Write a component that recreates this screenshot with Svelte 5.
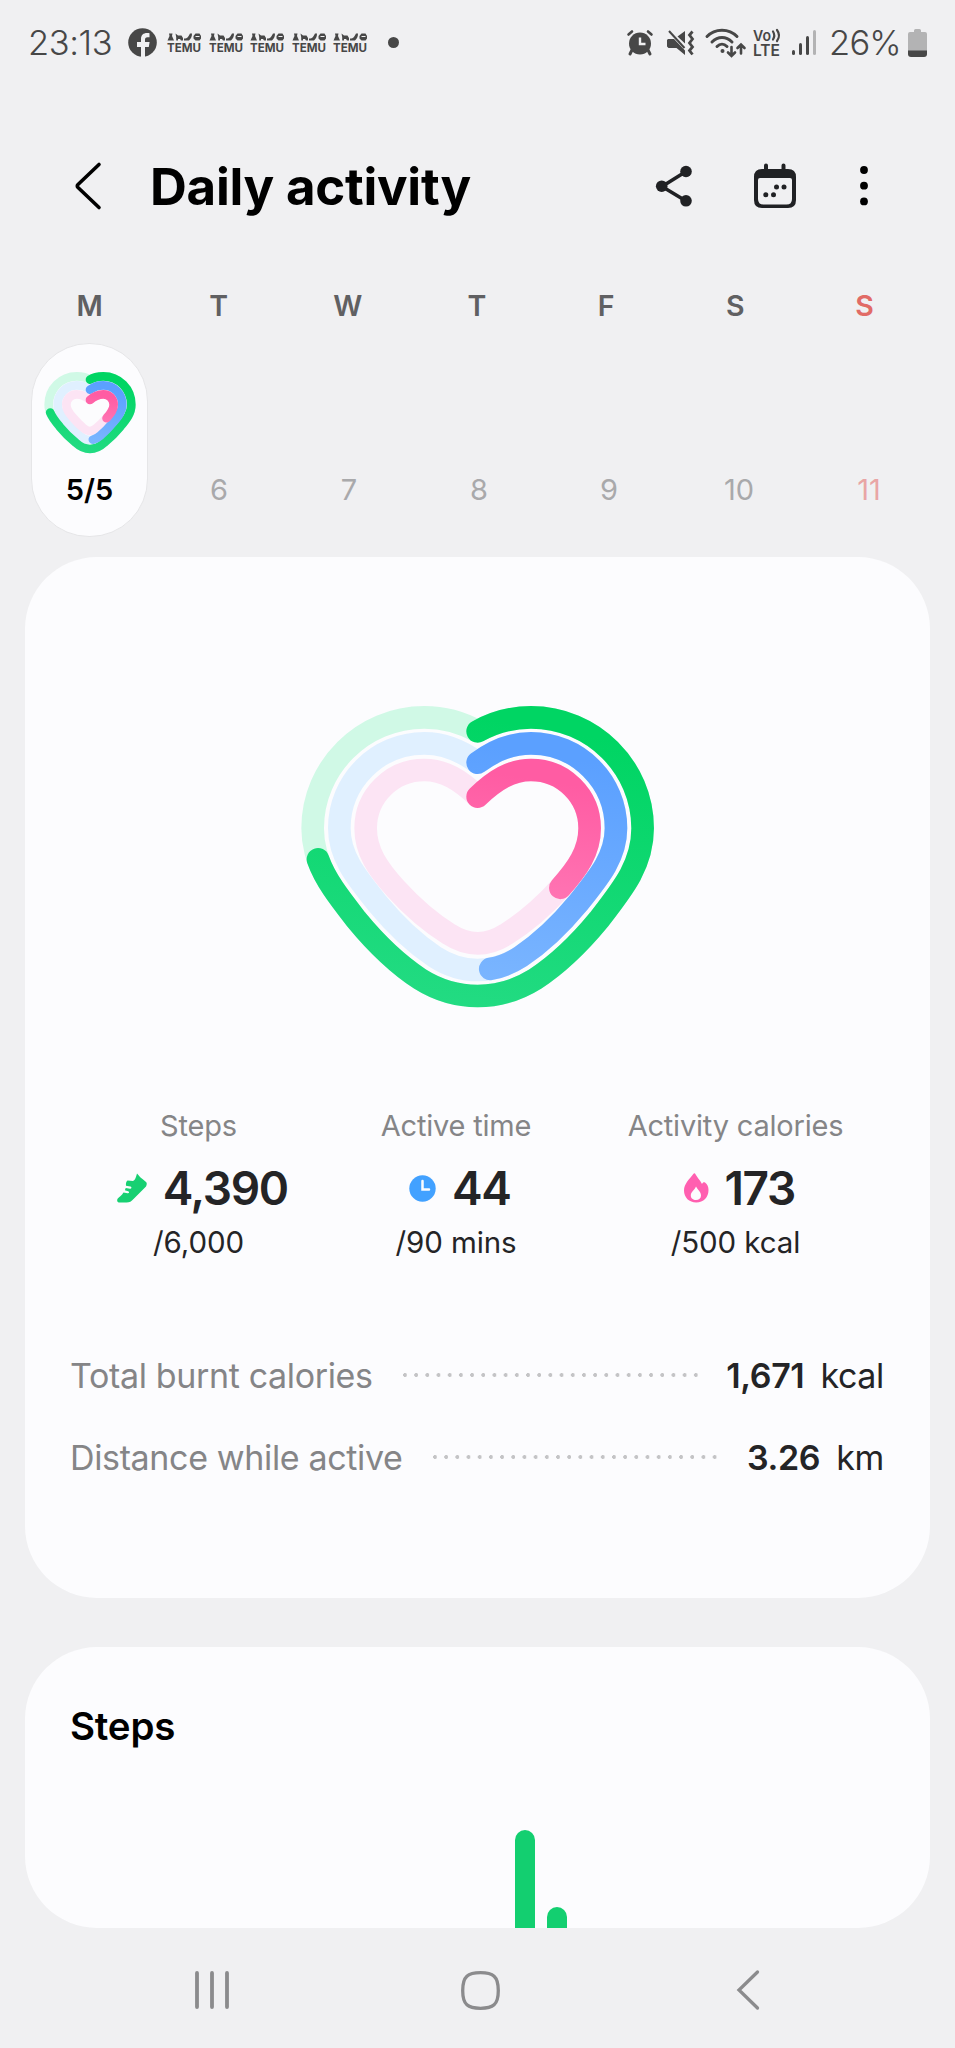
<script>
const weekdays = ["M", "T", "W", "T", "F", "S", "S"]
const dates = ["5/5", "6", "7", "8", "9", "10", "11"]
const signal = [5, 12, 19, 25]

// right half of each ring, from the notch down to the tip
const large = {
  cx: 593,
  stroke: 68,
  viewBox: "0 0 1186 1050",
  rings: [
    [[593, 154], [643, 126, 700, 112, 753, 112], [938, 112, 1088, 262, 1088, 445], [1088, 553, 1030, 625, 956, 720], [900, 788, 830, 855, 766, 897], [712, 931, 655, 948, 593, 948]],
    [[593, 248], [643, 211, 696, 190, 753, 190], [894, 190, 1008, 304, 1008, 445], [1008, 530, 958, 590, 893, 671], [840, 735, 782, 790, 722, 830], [682, 856, 640, 870, 593, 870]],
    [[593, 350], [645, 300, 694, 270, 753, 270], [850, 270, 929, 348, 929, 445], [929, 515, 892, 567, 839, 626], [790, 680, 735, 728, 678, 763], [652, 780, 623, 790, 593, 790]]
  ]
}
const small = {
  cx: 210,
  stroke: 26,
  viewBox: "72 270 276 256",
  rings: [
    [[210, 299], [222, 291, 236, 289, 250, 289], [297, 289, 334, 327, 334, 374], [334, 400, 319, 418, 301, 440], [287, 457, 270, 474, 253, 488], [240, 500, 226, 507, 210, 507]],
    [[210, 329], [222, 320, 236, 316, 250, 316], [282, 316, 307, 342, 307, 374], [307, 394, 295, 409, 280, 427], [268, 441, 255, 455, 241, 467], [232, 475, 222, 480, 210, 480]],
    [[210, 360], [223, 348, 236, 343, 250, 343], [268, 343, 281, 357, 281, 374], [281, 390, 272, 400, 261, 413], [250, 426, 240, 436, 230, 444], [224, 449, 217, 453, 210, 453]]
  ]
}
const colors = [
  { id: "green", track: "#d0f9e6", from: "#00d563", to: "#22db82" },
  { id: "blue", track: "#e0f0ff", from: "#5ba0ff", to: "#7ab5ff" },
  { id: "pink", track: "#fce4f4", from: "#ff5ca3", to: "#ff80bb" }
]
const stats = [
  { label: "Steps", icon: "shoe", value: "4,390", goal: "/6,000", percent: 72.8 },
  { label: "Active time", icon: "clock", value: "44", goal: "/90 mins", percent: 48.4 },
  { label: "Activity calories", icon: "flame", value: "173", goal: "/500 kcal", percent: 34.2 }
]
const totals = [
  { label: "Total burnt calories", value: "1,671", unit: "kcal" },
  { label: "Distance while active", value: "3.26", unit: "km" }
]
const bars = [{ height: 98 }, { height: 21 }]

const outline = (half, cx) => {
  const flip = (x) => 2 * cx - x
  const curves = half.slice(1)
  let d = `M${half[0].join(" ")}`
  curves.forEach((c) => { d += ` C${c.join(" ")}` })
  for (let i = curves.length - 1; i >= 0; i--) {
    const c = curves[i]
    const end = i > 0 ? curves[i - 1].slice(4) : half[0]
    d += ` C${flip(c[2])} ${c[3]} ${flip(c[0])} ${c[1]} ${flip(end[0])} ${end[1]}`
  }
  return d
}
</script>

{#snippet heart(shape, name)}
  <svg class="heart {name}" viewBox={shape.viewBox} fill="none" stroke-width={shape.stroke}>
    <defs>
      {#each colors as c}
        <linearGradient id="{name}-{c.id}" x1="0.5" y1="0" x2="0.3" y2="1">
          <stop offset="0" stop-color={c.from} />
          <stop offset="1" stop-color={c.to} />
        </linearGradient>
      {/each}
    </defs>
    {#each shape.rings as ring, i}
      <path d={outline(ring, shape.cx)} stroke={colors[i].track} />
    {/each}
    {#each shape.rings as ring, i}
      <path
        d={outline(ring, shape.cx)}
        stroke="url(#{name}-{colors[i].id})"
        stroke-linecap="round"
        pathLength="100"
        stroke-dasharray="{stats[i].percent} 200"
      />
    {/each}
  </svg>
{/snippet}

<div class="screen">
  <div class="status">
    <span class="time">23:13</span>
    <svg class="facebook" viewBox="0 0 29 29">
      <circle cx="14.5" cy="14.5" r="14.3" fill="#474747" />
      <path d="M13 30V19H9v-5h4v-3c0-4 2.4-6 6-6 1.300 0 2.500.2 2.500.2v4H19.500c-2 0-2.500 1.100-2.500 2.500V14h4.600l-.8 5H17v11z" fill="#f0f0f2" />
    </svg>
    <div class="temus">
      {#each Array(5) as _}
        <svg viewBox="0 0 34 20" fill="#474747">
          <path d="M2 .5h3.500L5 3l2 4.500H.5L2.500 3zM8.500.5l2.500 2h3.500L16 5v2.500h-2L13 6h-2v1.500H9.200V4zM17 5.500c4 0 4-1.500 6-5H25c0 3.500-1 5-3 7h-5z" />
          <path fill-rule="evenodd" d="M28.500.5h4L34 3v2.500L32.500 7.500h-4L26.500 5.500V3zM28.500 3v1h4V3z" />
          <text x="0" y="18.500" textLength="34" lengthAdjust="spacingAndGlyphs">TEMU</text>
        </svg>
      {/each}
    </div>
    <i class="more-dot"></i>
    <svg class="alarm" viewBox="0 0 26 26">
      <g fill="none" stroke="#474747" stroke-linecap="round">
        <path d="M1.500 4.500l3.500-3M24.500 4.500L21 1.500" stroke-width="2.600" />
        <path d="M5 20l-2 4M21 20l2 4" stroke-width="3" />
      </g>
      <circle cx="13" cy="13.500" r="11" fill="#474747" />
      <path d="M13 7.500V14h5.500" fill="none" stroke="#f0f0f2" stroke-width="2.400" />
    </svg>
    <svg class="mute" viewBox="0 0 27 26">
      <path d="M1 9h6l11 11.500V25L9.500 18H1.500L0 16.500V10zM10.500 6.500L18 1v12.500z" fill="#474747" />
      <path d="M2 1l15.500 17" stroke="#474747" stroke-width="2" />
      <path d="M25.500 1.500l-3 3.500 3 4-3 4 3 4-3 3.500 3 4" fill="none" stroke="#474747" stroke-width="2.800" />
    </svg>
    <svg class="wifi" viewBox="0 0 41 30" fill="none" stroke="#474747" stroke-width="3" stroke-linecap="round">
      <path d="M2 8.500c8-8.500 22-8.500 30 0M7 14c6-6 14-6 20 0M12 18.500c3-3 7-3 10 0" />
      <circle cx="17.500" cy="23" r="2" fill="#474747" stroke="none" />
      <path d="M26.500 19v8.500m-3.500-3l3.500 3.500 3.500-3.500M36 25.500V17m-3.500 3l3.500-3.500 3.500 3.500" stroke-width="2.600" />
    </svg>
    <svg class="volte" viewBox="0 0 29 30" fill="#474747">
      <text x="0" y="12.500" textLength="18" lengthAdjust="spacingAndGlyphs">Vo</text>
      <path d="M20 3.500q2.500 4 0 8M24 2q4 5.500 0 11" fill="none" stroke="#474747" stroke-width="2.200" stroke-linecap="round" />
      <text class="lte" x="0" y="28" textLength="27" lengthAdjust="spacingAndGlyphs">LTE</text>
    </svg>
    <div class="signal">
      {#each signal as h}
        <i class:off={h === 25} style="height: {h}px"></i>
      {/each}
    </div>
    <span class="percent">26%</span>
    <svg class="battery" viewBox="0 0 19 28">
      <path d="M2 3h4V1.500Q6 0 7.500 0h4Q13 0 13 1.500V3h4q2 0 2 2v17H0V5q0-2 2-2z" fill="#b3b3b4" />
      <path d="M0 21.500h19V25q0 3-3 3H3q-3 0-3-3z" fill="#474747" />
    </svg>
  </div>

  <header>
    <svg class="back" viewBox="0 0 26 48" fill="none" stroke="#000" stroke-width="3.600" stroke-linecap="round" stroke-linejoin="round">
      <path d="M24 2.500L3 22.500q-1.500 1.500 0 3L24 45.500" />
    </svg>
    <h1>Daily activity</h1>
    <svg class="share" viewBox="0 0 36 42" fill="#202124">
      <path d="M6 21.500L30 6.500M6 21.500L30 36" stroke="#202124" stroke-width="3.600" />
      <circle cx="5.700" cy="21.200" r="5.800" /><circle cx="30" cy="6.500" r="5.800" /><circle cx="30" cy="35.800" r="5.800" />
    </svg>
    <svg class="calendar" viewBox="0 0 42 46" fill="#202124">
      <path d="M12 2.500v8M29.500 2.500v8" stroke="#202124" stroke-width="4" stroke-linecap="round" />
      <path fill-rule="evenodd" d="M8 6h26q8 0 8 8v23q0 8-8 8H8q-8 0-8-8V14q0-8 8-8zM4 17v19q0 5.500 5.500 5.500h23Q38 41.500 38 36V17q0-2-2-2H6q-2 0-2 2z" />
      <circle cx="22.500" cy="24" r="2.500" /><circle cx="30" cy="24" r="2.500" /><circle cx="11.800" cy="31.800" r="2.500" /><circle cx="19.500" cy="31.800" r="2.500" />
    </svg>
    <svg class="menu" viewBox="0 0 8 40">
      <circle cx="4" cy="4" r="3.900" /><circle cx="4" cy="19.700" r="3.900" /><circle cx="4" cy="35.400" r="3.900" />
    </svg>
  </header>

  <div class="weekdays">
    {#each weekdays as day, i}
      <span class:sunday={i === 6}>{day}</span>
    {/each}
  </div>
  <div class="dates">
    {#each dates as date, i}
      <div class="date" class:selected={i === 0} class:sunday={i === 6}>
        {#if i === 0}
          {@render heart(small, "mini")}
        {/if}
        <span>{date}</span>
      </div>
    {/each}
  </div>

  <section class="card summary">
    {@render heart(large, "main")}
    <div class="stats">
      {#each stats as s}
        <div class="stat">
          <span class="label">{s.label}</span>
          <div class="value">
            {#if s.icon === "shoe"}
              <svg width="30" height="30" viewBox="0 0 30 30">
                <path d="M20 .5c1.500 1.500 3 3.800 5.500 5.500l3.500 3c1 1 1 2.300 0 4.500L16.500 26c-2 2.500-4 3.500-7 3.500H2.500C0 29.500-.3 27 .8 25.500c1.500-2 4-3 5.700-6l4 .8c1.800.3 2.200-1.500.6-2l-3.200-1 .8-2.300 4.300.8c1.600.2 2-1.800.5-2.200L9 12.700C8.800 10.500 9 8.500 10.500 7.500l5.500.5c2.300-1 3-4 4-7.500z" fill="#17d072" />
              </svg>
            {:else if s.icon === "clock"}
              <svg width="27" height="27" viewBox="0 0 27 27">
                <circle cx="13.500" cy="13.500" r="13.200" fill="#42a1ff" />
                <path d="M13.500 6v8.500H20" fill="none" stroke="#fcfcfe" stroke-width="2.500" stroke-linecap="round" />
              </svg>
            {:else}
              <svg width="25" height="30" viewBox="0 0 25 30">
                <path d="M11 .5c1.500 3 5 6.500 7 10.500.7-1.500 1.700-2 3-1.500C23.500 11 24.500 14 24.500 17c0 7.500-5 12.500-12.200 12.500S0 24.500 0 17.500C0 11 5.500 6 9.500.8 10 .2 10.700 0 11 .5z" fill="#ff5fb0" />
                <path d="M12 13.500c2 3.500 5 5.500 5 9 0 2.800-2.100 4.500-5 4.500s-5.200-1.700-5.200-4.500c0-3.500 3.700-5.500 5.200-9z" fill="#fcfcfe" />
              </svg>
            {/if}
            <strong>{s.value}</strong>
          </div>
          <span class="goal">{s.goal}</span>
        </div>
      {/each}
    </div>
    <div class="totals">
      {#each totals as t}
        <div class="total">
          <span class="name">{t.label}</span>
          <i class="leader"></i>
          <b>{t.value}</b>
          <span>{t.unit}</span>
        </div>
      {/each}
    </div>
  </section>

  <section class="card steps">
    <h2>Steps</h2>
    <div class="bars">
      {#each bars as bar}
        <i style="height: {bar.height}px"></i>
      {/each}
    </div>
  </section>

  <nav>
    <svg width="34" height="38" viewBox="0 0 34 38" stroke="#8b8b8d" stroke-width="3.800" stroke-linecap="round">
      <path d="M2 2v34M17 2v34M32 2v34" />
    </svg>
    <svg class="home" width="39" height="39" viewBox="0 0 39 39" fill="none" stroke="#8b8b8d" stroke-width="3.300">
      <path d="M19.500 1.700C32 1.700 37.300 5 37.300 19.500S32 37.300 19.500 37.300 1.700 34 1.700 19.500 7 1.700 19.500 1.700z" />
    </svg>
    <svg width="23" height="40" viewBox="0 0 23 40" fill="none" stroke="#8b8b8d" stroke-width="3.300" stroke-linecap="round">
      <path d="M20.500 2L2 20l18.500 18" />
    </svg>
  </nav>
</div>

<style>
:global(body) {
  margin: 0;
  background: #f0f0f2;
}
.screen {
  width: 955px;
  height: 2048px;
  overflow: hidden;
  background: #f0f0f2;
  color: #242426;
  font-family: Inter, Roboto, sans-serif;
}
svg {
  display: block;
  flex: none;
  overflow: visible;
}
.status {
  display: flex;
  align-items: center;
  height: 85px;
  padding: 0 28px;
  color: #474747;
}
.time {
  width: 100px;
  font-size: 34.5px;
  font-weight: 350;
  letter-spacing: -0.4px;
}
.facebook {
  width: 29px;
  height: 29px;
}
.temus {
  display: flex;
  gap: 7.500px;
  margin-left: 10px;
}
.temus svg {
  width: 34px;
  height: 20px;
}
.temus text {
  font-size: 12px;
  font-weight: 700;
}
.more-dot {
  width: 11px;
  height: 11px;
  margin-left: 21px;
  border-radius: 50%;
  background: #474747;
}
.alarm {
  width: 26px;
  height: 26px;
  margin-left: auto;
}
.mute {
  width: 27px;
  height: 26px;
  margin-left: 14px;
}
.wifi {
  width: 41px;
  height: 30px;
  margin-left: 11px;
}
.volte {
  width: 29px;
  height: 30px;
  margin-left: 7px;
}
.volte text {
  font-size: 15px;
  font-weight: 600;
}
.volte .lte {
  font-size: 16px;
}
.signal {
  display: flex;
  align-items: flex-end;
  gap: 3.500px;
  height: 25px;
  margin-left: 10px;
}
.signal i {
  width: 3.400px;
  border-radius: 2px;
  background: #474747;
}
.signal .off {
  background: #b3b3b4;
}
.percent {
  width: 79px;
  margin-left: 13px;
  font-size: 34.5px;
  font-weight: 350;
  letter-spacing: -0.8px;
}
.battery {
  width: 19px;
  height: 28px;
}
header {
  display: flex;
  align-items: center;
  height: 202px;
  padding: 0 87px 0 75px;
}
header svg {
  margin-bottom: 1px;
}
.back {
  width: 26px;
  height: 48px;
}
h1 {
  flex: 1;
  margin: 0 0 0 49px;
  color: #000;
  font-size: 51px;
  font-weight: 700;
  letter-spacing: -0.25px;
  white-space: nowrap;
}
.share {
  width: 36px;
  height: 42px;
}
.calendar {
  width: 42px;
  height: 46px;
  margin: 0 64px 1px 62px;
}
.menu {
  width: 8px;
  height: 40px;
}
.weekdays {
  display: grid;
  grid-template-columns: repeat(7, 1fr);
  padding: 0 26px 0 25px;
  color: #606062;
  font-size: 28.5px;
  font-weight: 600;
  line-height: 37px;
  text-align: center;
}
.weekdays .sunday {
  color: #e16b66;
}
.dates {
  display: grid;
  grid-template-columns: repeat(7, 130px);
  height: 194px;
  margin: 19px 0 20px 24px;
}
.date {
  display: flex;
  flex-direction: column;
  align-items: center;
  justify-content: flex-end;
  box-sizing: border-box;
  padding-bottom: 27.5px;
  color: #a9a9ab;
  font-size: 29px;
  line-height: 40px;
}
.date.sunday {
  color: #e9a5a5;
}
.selected {
  width: 117px;
  margin-left: 7px;
  padding-bottom: 26.5px;
  border: 1px solid #e6e6e8;
  border-radius: 58px;
  background: #fcfcfe;
  color: #000;
  font-weight: 600;
}
.mini {
  width: 92px;
  height: 85.300px;
  margin-bottom: 14px;
}
.card {
  box-sizing: border-box;
  margin: 0 25px;
  border-radius: 72px;
  background: #fcfcfe;
}
.summary {
  height: 1041px;
  padding-top: 123px;
}
.main {
  width: 395.300px;
  height: 350px;
  margin: 0 auto;
}
.stats {
  display: grid;
  grid-template-columns: 259px 256px 303px;
  margin: 78px 0 0 44px;
}
.stat {
  display: flex;
  flex-direction: column;
  align-items: center;
}
.label {
  color: #858587;
  font-size: 29px;
  line-height: 36px;
  letter-spacing: -0.2px;
}
.value {
  display: flex;
  align-items: center;
  gap: 15.5px;
  height: 56px;
  margin: 16px 0 8px;
  padding-left: 8px;
}
strong {
  font-size: 46px;
  font-weight: 600;
  letter-spacing: -1.300px;
}
.goal {
  font-size: 29.5px;
  line-height: 36px;
  letter-spacing: -0.1px;
}
.totals {
  display: flex;
  flex-direction: column;
  gap: 38px;
  margin: 94px 46px 0 45px;
}
.total {
  display: flex;
  align-items: center;
  font-size: 34px;
  line-height: 44px;
  letter-spacing: -0.35px;
}
.name {
  color: #858587;
}
.leader {
  flex: 1;
  height: 4px;
  margin: 0 24px 2px 30px;
  background: radial-gradient(circle at 2px 2px, #c4c4c6 1.700px, transparent 2.200px) 0 0 / 11.200px 4px;
}
.total b {
  margin-right: 16px;
  font-weight: 600;
}
.steps {
  display: flex;
  flex-direction: column;
  height: 281px;
  margin-top: 49px;
  padding: 54px 46px 0 45px;
}
h2 {
  margin: 0;
  color: #000;
  font-size: 38.5px;
  font-weight: 600;
  line-height: 50px;
  letter-spacing: -0.200px;
}
.bars {
  display: flex;
  flex: 1;
  align-items: flex-end;
  gap: 12px;
  padding-left: 445px;
}
.bars i {
  width: 20px;
  border-radius: 10px 10px 0 0;
  background: #13cf70;
}
nav {
  display: flex;
  align-items: center;
  height: 124px;
  padding-left: 195px;
}
.home {
  margin: 0 237px 0 232px;
}
</style>
